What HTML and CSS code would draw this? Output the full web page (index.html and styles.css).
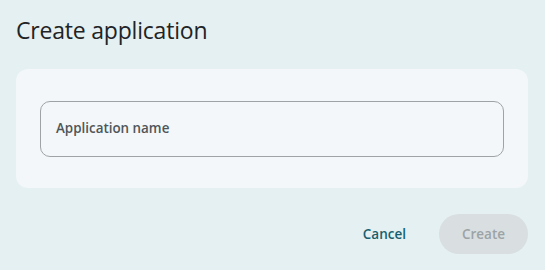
FILE: index.html
```html
<!DOCTYPE html>
<html>
<head>
<meta charset="utf-8">
<link rel="stylesheet" href="styles.css">
</head>
<body>
<div class="page">
  <h1 class="title">Create application</h1>
  <div class="card">
    <div class="field"><span class="label">Application name</span></div>
  </div>
  <div class="actions">
    <button class="btn cancel">Cancel</button>
    <button class="btn create" disabled>Create</button>
  </div>
</div>
</body>
</html>
```
FILE: styles.css
```css
html, body { margin: 0; padding: 0; }
body {
  background: #e5f0f2;
  font-family: "Open Sans", "Noto Sans", sans-serif;
  width: 545px;
  height: 270px;
  overflow: hidden;
}
.page { padding: 14px 17px 0 16px; }
.title {
  margin: 0;
  font-weight: 400;
  font-size: 23px;
  line-height: 32px;
  color: #1f2426;
  letter-spacing: -0.2px;
}
.card {
  margin-top: 23px;
  background: #f3f7f9;
  border-radius: 12px;
  height: 119px;
  padding: 32px 24px 0 24px;
  box-sizing: border-box;
}
.field {
  height: 56px;
  border: 1px solid #9ea3a6;
  border-radius: 10px;
  box-sizing: border-box;
  display: flex;
  align-items: center;
  padding-left: 15px;
  padding-bottom: 2px;
}
.label {
  font-size: 13.4px;
  font-weight: 600;
  color: #4f5558;
}
.actions {
  display: flex;
  justify-content: flex-end;
  align-items: center;
  margin-top: 26px;
  gap: 16px;
}
.btn {
  font-family: inherit;
  font-size: 13.5px;
  font-weight: 600;
  border: none;
  background: none;
  height: 40px;
  border-radius: 20px;
  padding: 0 24px;
}
.cancel { color: #185f6e; padding: 0 17px; }
.create { background: #d9dee0; color: #9ca3a6; width: 89px; padding: 0; }
```
